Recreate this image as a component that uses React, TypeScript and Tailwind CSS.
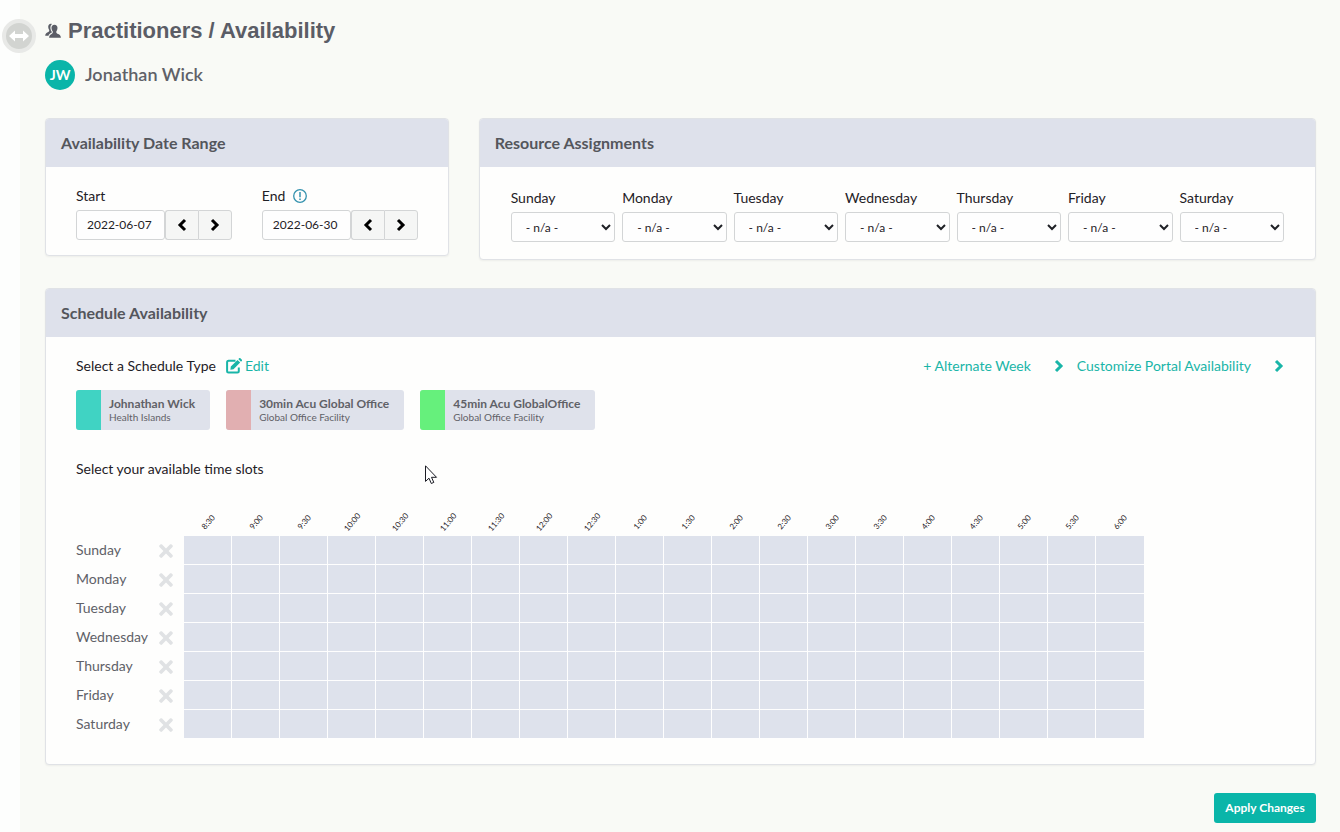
import { useState } from "react";
import type { ReactNode } from "react";
import { FaTimes } from "react-icons/fa";

const DAYS = ["Sunday", "Monday", "Tuesday", "Wednesday", "Thursday", "Friday", "Saturday"];

const TIMES = [
  "8:30", "9:00", "9:30", "10:00", "10:30", "11:00", "11:30", "12:00", "12:30", "1:00",
  "1:30", "2:00", "2:30", "3:00", "3:30", "4:00", "4:30", "5:00", "5:30", "6:00",
];

const SCHEDULE_TYPES = [
  { name: "Johnathan Wick", place: "Health Islands", color: "bg-[#40d3c3]" },
  { name: "30min Acu Global Office", place: "Global Office Facility", color: "bg-[#e1afb1]" },
  { name: "45min Acu GlobalOffice", place: "Global Office Facility", color: "bg-[#66f07c]" },
];

export default function App() {
  const [start, setStart] = useState("2022-06-07");
  const [end, setEnd] = useState("2022-06-30");
  const [slots, setSlots] = useState<Record<string, boolean>>({});

  const toggleSlot = (key: string) => setSlots((prev) => ({ ...prev, [key]: !prev[key] }));

  const clearDay = (day: string) =>
    setSlots((prev) => Object.fromEntries(Object.entries(prev).filter(([key]) => !key.startsWith(day))));

  return (
    <div className="relative flex min-h-screen bg-[#f9faf6] font-['Lato',sans-serif] text-sm text-[#1f2126]">
      {/* Collapsed sidebar */}
      <aside className="relative w-5 shrink-0 bg-[#fdfefd]">
        <button
          aria-label="Toggle sidebar"
          className="absolute top-[19px] left-[2px] flex h-[34px] w-[34px] items-center justify-center rounded-full border-4 border-[#e8e9e7] bg-[#d2d4d1] text-white"
        >
          <ResizeIcon />
        </button>
      </aside>

      <main className="min-w-0 flex-1 pt-4 pr-6 pb-2 pl-[25px]">
        <h1 className="flex items-center gap-[7px] font-['Liberation_Sans',sans-serif] text-[22px] leading-[30px] font-bold text-[#5b5d66]">
          <PeopleIcon />
          Practitioners / Availability
        </h1>

        <div className="mt-3.5 flex items-center gap-2.5">
          <span className="flex h-[30px] w-[30px] items-center justify-center rounded-full bg-[#0ab5a9] text-sm font-bold text-white">
            JW
          </span>
          <span className="pb-0.5 text-lg font-semibold text-[#5f6168]">Jonathan Wick</span>
        </div>

        <div className="mt-7 grid grid-cols-3 items-start gap-[30px]">
          <Card title="Availability Date Range">
            <div className="grid grid-cols-2 gap-[30px] px-[30px] pt-[19px] pb-[15px]">
              <DateField id="start" label="Start" value={start} onChange={setStart} />
              <DateField id="end" label="End" value={end} onChange={setEnd} icon={<AlertIcon />} />
            </div>
          </Card>

          <Card title="Resource Assignments" className="col-span-2">
            <div className="grid grid-cols-7 gap-[7px] px-[31px] pt-[21px] pb-[17px]">
              {DAYS.map((day) => (
                <div key={day}>
                  <label htmlFor={`resource-${day}`} className="mb-1 block leading-5">
                    {day}
                  </label>
                  <select
                    id={`resource-${day}`}
                    className="h-[30px] w-full rounded-[3px] border border-[#d3d5d6] bg-[#fefefe] pl-[10px] text-xs"
                  >
                    <option>- n/a -</option>
                  </select>
                </div>
              ))}
            </div>
          </Card>
        </div>

        <Card title="Schedule Availability" className="mt-7">
          <div className="px-[30px] pt-[19px] pb-[25px]">
            <div className="flex items-center justify-between">
              <div className="flex items-center gap-2.5">
                <span className="leading-5">Select a Schedule Type</span>
                <a href="#edit" className="flex items-center gap-[3px] leading-5 text-[#19b5a8]">
                  <EditIcon />
                  Edit
                </a>
              </div>
              <div className="flex items-center gap-3">
                <a href="#alternate" className="flex items-center gap-[22px] leading-5 text-[#19b5a8]">
                  + Alternate Week
                  <Chevron />
                </a>
                <a href="#portal" className="flex items-center gap-[22px] leading-5 text-[#19b5a8]">
                  Customize Portal Availability
                  <Chevron />
                </a>
              </div>
            </div>

            <div className="mt-3.5 flex gap-4">
              {SCHEDULE_TYPES.map((type) => (
                <button
                  key={type.name}
                  className="flex h-10 overflow-hidden rounded-[3px] bg-[#dfe2eb] pr-[15px] text-left text-[#5f6167]"
                >
                  <span className={`h-10 w-[25px] ${type.color}`} />
                  <span className="pt-1.5 pl-2">
                    <span className="block text-xs leading-4 font-bold">{type.name}</span>
                    <span className="block text-[10px] leading-[11px]">{type.place}</span>
                  </span>
                </button>
              ))}
            </div>

            <p className="mt-[29px] leading-5">Select your available time slots</p>

            <table className="mt-[29px] border-separate border-spacing-0">
              <thead>
                <tr className="h-7">
                  <td className="w-[82px]" />
                  <td className="w-[26px]" />
                  {TIMES.map((time) => (
                    <th key={time} scope="col" className="w-12 min-w-12 p-0 text-[8px] leading-7 font-normal">
                      <span className="block -rotate-50">{time}</span>
                    </th>
                  ))}
                </tr>
              </thead>
              <tbody className="text-[#5f6168]">
                {DAYS.map((day) => (
                  <tr key={day} className="h-[29px]">
                    <th scope="row" className="p-0 pb-0.5 text-left leading-5 font-normal">
                      {day}
                    </th>
                    <td className="p-0">
                      <button
                        aria-label={`Clear ${day}`}
                        onClick={() => clearDay(day)}
                        className="flex h-7 w-4 items-center justify-center text-[#e0e2e4]"
                      >
                        <FaTimes size={20} className="shrink-0" />
                      </button>
                    </td>
                    {TIMES.map((time) => (
                      <td
                        key={time}
                        onClick={() => toggleSlot(day + time)}
                        className={`border-r border-b border-[#fefefe] p-0 last:border-r-0 ${
                          slots[day + time] ? "bg-[#40d3c3]" : "bg-[#dee2ec]"
                        }`}
                      />
                    ))}
                  </tr>
                ))}
              </tbody>
            </table>
          </div>
        </Card>

        <div className="mt-7 flex justify-end">
          <button className="h-[30px] w-[102px] rounded-[3px] bg-[#0ab5a9] text-xs font-bold text-white">
            Apply Changes
          </button>
        </div>
      </main>

      <Cursor />
    </div>
  );
}

function Card({ title, className = "", children }: { title: string; className?: string; children: ReactNode }) {
  return (
    <section className={`overflow-hidden rounded border border-[#e0e2e6] bg-[#fefefd] shadow-xs ${className}`}>
      <h2 className="bg-[#dee1eb] px-[15px] text-base leading-[48px] font-bold text-[#54565c]">{title}</h2>
      {children}
    </section>
  );
}

function DateField({
  id,
  label,
  value,
  onChange,
  icon,
}: {
  id: string;
  label: string;
  value: string;
  onChange: (value: string) => void;
  icon?: ReactNode;
}) {
  const shift = (days: number) => {
    const date = new Date(value);
    date.setUTCDate(date.getUTCDate() + days);
    onChange(date.toISOString().slice(0, 10));
  };

  return (
    <div>
      <div className="mb-1 flex items-center gap-2">
        <label htmlFor={id} className="leading-5">
          {label}
        </label>
        {icon}
      </div>
      <div className="flex h-[30px]">
        <input
          id={id}
          value={value}
          onChange={(e) => onChange(e.target.value)}
          className="w-0 min-w-0 flex-1 rounded-[3px] border border-[#d3d5d6] bg-[#fefefe] px-[10px] text-xs"
        />
        <button
          aria-label="Previous day"
          onClick={() => shift(-1)}
          className="flex w-[33px] items-center justify-center rounded-l-[3px] border-y border-l border-[#d3d5d6] bg-[#f5f6f5] text-black"
        >
          <Chevron left />
        </button>
        <button
          aria-label="Next day"
          onClick={() => shift(1)}
          className="flex w-[34px] items-center justify-center rounded-r-[3px] border border-[#d3d5d6] bg-[#f5f6f5] text-black"
        >
          <Chevron />
        </button>
      </div>
    </div>
  );
}

function Chevron({ left = false }: { left?: boolean }) {
  return (
    <svg width="12" height="14" viewBox="0 0 12 14" fill="none" stroke="currentColor" strokeWidth="3" aria-hidden="true">
      <path d={left ? "M9 2L4 7l5 5" : "M3 2l5 5-5 5"} />
    </svg>
  );
}

function EditIcon() {
  return (
    <svg width="16" height="16" viewBox="0 0 16 16" fill="none" aria-hidden="true">
      <path
        d="M9.500 2.700H2.600C1.700 2.700 1.100 3.300 1.100 4.200v8.700c0 .9.600 1.500 1.500 1.500h8.700c.9 0 1.500-.6 1.500-1.500V9.500"
        stroke="currentColor"
        strokeWidth="2"
      />
      <path d="M4.800 8.600l6.700-6.700 2.700 2.700-6.700 6.700-3.100.4zM12.300 1.100l.7-.7c.5-.5 1.100-.5 1.600 0l1.100 1.100c.5.500.5 1.100 0 1.600l-.7.7z" fill="currentColor" />
    </svg>
  );
}

function ResizeIcon() {
  return (
    <svg width="20" height="12" viewBox="0 0 20 12" fill="currentColor" className="shrink-0" aria-hidden="true">
      <path d="M0 6l6-5.500V4h8V.5L20 6l-6 5.500V8H6v3.500z" />
    </svg>
  );
}

function PeopleIcon() {
  return (
    <svg width="16" height="16" viewBox="0 0 16 16" fill="currentColor" aria-hidden="true">
      <path d="M5.900.8C4.200.9 3.100 2.200 3.200 4c.1 1.300.5 2.200 1 2.900.2.900-.1 1.500-.8 2C1.800 9.700.3 10.400.2 12.700h3.300c.3-1.400 1.400-2.100 3-2.900.4-.2.400-.7.200-1.100-.7-1-1.200-2.100-1.300-3.500-.1-1.600.4-3 1.500-4.100-.3-.2-.6-.3-1-.3z" />
      <path d="M9.400 1.800c-1.900 0-3 1.300-2.900 3.300.1 1.500.6 2.600 1.300 3.400.2 1.100-.1 1.800-.9 2.200-1.700.9-2.700 1.500-2.800 4h11.800c-.1-2.500-1.500-3.200-3.500-4-.9-.4-1.300-1.100-1.100-2.200.7-.8 1.100-1.900 1.200-3.400.1-2-1.100-3.300-3.100-3.300z" />
    </svg>
  );
}

function AlertIcon() {
  return (
    <svg width="14" height="14" viewBox="0 0 14 14" fill="none" stroke="#3492ae" strokeWidth="1.3" aria-hidden="true">
      <circle cx="7" cy="7" r="6.3" />
      <path d="M7 3v5.200M7 9.600v1.500" strokeWidth="1.500" />
    </svg>
  );
}

function Cursor() {
  return (
    <svg
      className="pointer-events-none absolute top-[465px] left-[425px]"
      width="13"
      height="20"
      viewBox="0 0 13 20"
      fill="#fff"
      stroke="#1b1c24"
      aria-hidden="true"
    >
      <path d="M.5.8v15.600l3.500-3.200 2.300 5.300 2.500-1.100-2.300-5.100h5z" />
    </svg>
  );
}
